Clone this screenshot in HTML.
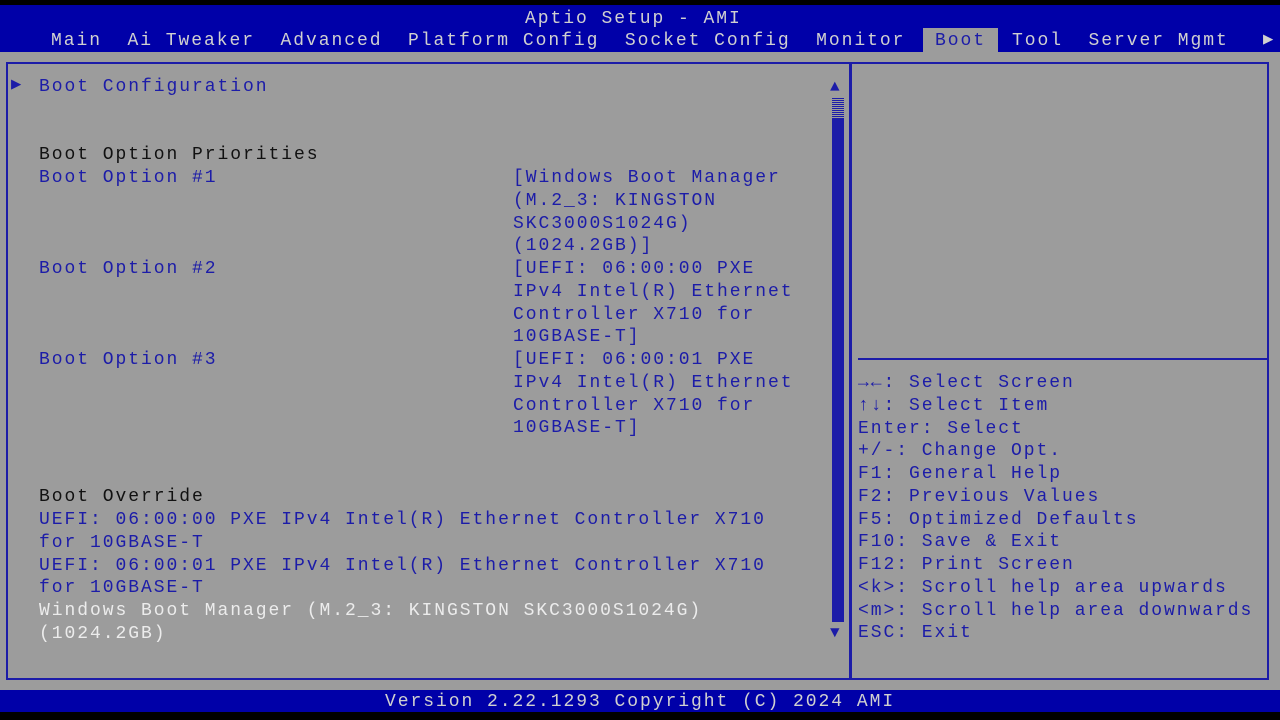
<!DOCTYPE html><html><head><style>
body{margin:0;width:1280px;height:720px;background:#000;position:relative;overflow:hidden;font-family:"Liberation Mono","DejaVu Sans Mono",monospace;font-size:18px;letter-spacing:1.95px}
.a{position:absolute;white-space:pre;line-height:22.75px}
#hdr{position:absolute;left:0;top:5px;width:1280px;height:47px;background:#0000a8}
#body{position:absolute;left:0;top:52px;width:1280px;height:638px;background:#9c9c9c}
#ftr{position:absolute;left:0;top:690px;width:1280px;height:22px;background:#0000a8}
.w{color:#d0d0d0}.b{color:#1c1ca8}.k{color:#111}.wh{color:#ececec}
</style></head><body>
<div id="hdr"></div><div id="body"></div><div id="ftr"></div>
<div class="a w" style="left:525px;top:8px">Aptio Setup - AMI</div>
<div style="position:absolute;left:923px;top:28px;width:75px;height:24px;background:#9c9c9c"></div>
<div class="a w" style="left:51px;top:30px">Main  Ai Tweaker  Advanced  Platform Config  Socket Config  Monitor</div>
<div class="a b" style="left:935px;top:30px">Boot</div>
<div class="a w" style="left:1012px;top:30px">Tool  Server Mgmt</div>
<div class="a w" style="left:1263px;top:30px;font-size:17px">▶</div>
<div style="position:absolute;left:6px;top:62px;width:1259px;height:614px;border:2px solid #1c1ca8"></div>
<div style="position:absolute;left:849px;top:64px;width:3px;height:614px;background:#1c1ca8"></div>
<div style="position:absolute;left:858px;top:358px;width:409px;height:2px;background:#1c1ca8"></div>
<div style="position:absolute;left:832px;top:97px;width:12px;height:22px;background:repeating-linear-gradient(0deg,#1c1ca8 0 1px,#9c9c9c 1px 2px)"></div>
<div style="position:absolute;left:832px;top:119px;width:12px;height:503px;background:#1c1ca8"></div>
<div class="a b" style="left:830px;top:76px;font-size:16px">▲</div>
<div class="a b" style="left:830px;top:622px;font-size:16px">▼</div>
<div class="a b" style="left:11px;top:75px;font-size:17px">▶</div>
<div class="a b" style="left:39px;top:76px">Boot Configuration</div>
<div class="a k" style="left:39px;top:144px">Boot Option Priorities</div>
<div class="a b" style="left:39px;top:167px">Boot Option #1</div>
<div class="a b" style="left:39px;top:258px">Boot Option #2</div>
<div class="a b" style="left:39px;top:349px">Boot Option #3</div>
<div class="a b" style="left:513px;top:167px">[Windows Boot Manager
(M.2_3: KINGSTON
SKC3000S1024G)
(1024.2GB)]
[UEFI: 06:00:00 PXE
IPv4 Intel(R) Ethernet
Controller X710 for
10GBASE-T]
[UEFI: 06:00:01 PXE
IPv4 Intel(R) Ethernet
Controller X710 for
10GBASE-T]</div>
<div class="a k" style="left:39px;top:486px">Boot Override</div>
<div class="a b" style="left:39px;top:509px">UEFI: 06:00:00 PXE IPv4 Intel(R) Ethernet Controller X710
for 10GBASE-T
UEFI: 06:00:01 PXE IPv4 Intel(R) Ethernet Controller X710
for 10GBASE-T</div>
<div class="a wh" style="left:39px;top:600px">Windows Boot Manager (M.2_3: KINGSTON SKC3000S1024G)
(1024.2GB)</div>
<div class="a b" style="left:858px;top:372px">→←: Select Screen
↑↓: Select Item
Enter: Select
+/-: Change Opt.
F1: General Help
F2: Previous Values
F5: Optimized Defaults
F10: Save &amp; Exit
F12: Print Screen
&lt;k&gt;: Scroll help area upwards
&lt;m&gt;: Scroll help area downwards
ESC: Exit</div>
<div class="a w" style="left:385px;top:691px">Version 2.22.1293 Copyright (C) 2024 AMI</div>
</body></html>
